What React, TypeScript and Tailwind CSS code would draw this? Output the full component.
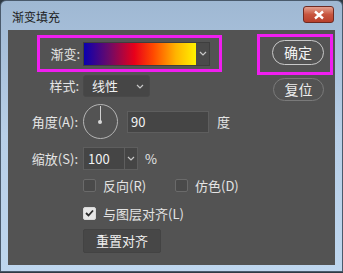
import React from 'react';

const font = { fontFamily: '"Noto Sans CJK SC", "Liberation Sans", sans-serif' };

const Chevron = () => (
  <svg width="8" height="5" viewBox="0 0 8 5" fill="none">
    <path d="M1 1l3 3 3-3" stroke="#c8c8c8" strokeWidth="1.2" />
  </svg>
);

const Checkbox = ({ checked, label }: { checked?: boolean; label: string }) => (
  <div className="flex items-center gap-[7px]">
    <span
      className={`flex h-[13px] w-[13px] items-center justify-center rounded-[2px] border ${
        checked ? 'border-[#d8d8d8] bg-[#e6e6e6]' : 'border-[#6a6a6a] bg-[#4a4a4a]'
      }`}
    >
      {checked && (
        <svg width="9" height="8" viewBox="0 0 9 8" fill="none">
          <path d="M1 4l2.5 2.5L8 1.5" stroke="#2a2a2a" strokeWidth="1.8" />
        </svg>
      )}
    </span>
    <span className="text-[13px] leading-none text-[#e4e4e4]">{label}</span>
  </div>
);

export default function App() {
  return (
    <div style={font} className="relative h-[273px] w-[343px] overflow-hidden bg-[#2f3a44]">
      <div className="flex h-[272px] w-[343px] flex-col rounded-t-[6px] border border-[#4a5a6c] bg-gradient-to-b from-[#9fb8d3] via-[#b8cfe7] to-[#bed6ee] pl-[7px] pr-[7px]">
        {/* title bar */}
        <div className="flex h-[29px] shrink-0 items-center justify-between">
          <span className="pl-[4px] pt-[3px] text-[12px] text-[#1c1c1c]">渐变填充</span>
          <div className="mb-[2px] mr-[1px] flex h-[17px] w-[31px] items-center justify-center rounded-[3px] border border-[#6e2a22] bg-gradient-to-b from-[#e3a090] via-[#c8553f] to-[#b8402c]">
            <svg width="12" height="10" viewBox="0 0 12 10">
              <path d="M2 1.5l8 7M10 1.5l-8 7" stroke="#ffffff" strokeWidth="2.4" />
            </svg>
          </div>
        </div>

        {/* content */}
        <div className="flex h-[235px] w-[327px] bg-[#535353] text-[#e4e4e4]">
          <div className="flex flex-1 flex-col">
            {/* gradient row */}
            <div className="ml-[29px] mt-[5px] flex h-[37px] w-[185px] items-center border-[3px] border-[#f01ef0]">
              <span className="w-[40px] shrink-0 text-right text-[13px]">渐变:</span>
              <div className="ml-[3px] flex h-[24px] w-[127px] border border-[#3e3e3e]">
                <div className="flex-1 bg-[linear-gradient(to_right,#0a00b0_0%,#6a0a6a_22%,#e8001a_45%,#ff4a00_62%,#ffb400_82%,#fff200_100%)]" />
                <div className="flex w-[13px] items-center justify-center bg-[#4a4a4a]">
                  <Chevron />
                </div>
              </div>
            </div>

            {/* style */}
            <div className="mt-[3px] flex h-[22px] items-center">
              <span className="w-[71px] shrink-0 text-right text-[13px]">样式:</span>
              <div className="ml-[4px] flex h-[22px] w-[67px] items-center justify-between rounded-[3px] border border-[#494949] bg-[#464646] pl-[8px] pr-[5px]">
                <span className="text-[13px] text-[#f0f0f0]">线性</span>
                <Chevron />
              </div>
            </div>

            {/* angle */}
            <div className="mt-[7px] flex h-[35px] items-center">
              <span className="w-[70px] shrink-0 text-right text-[13px]">角度(A):</span>
              <div className="relative ml-[5px] h-[35px] w-[35px] rounded-full border-[1.5px] border-[#b4b4b4]">
                <div className="absolute left-[15.5px] top-[1px] h-[16px] w-[1.5px] bg-[#d0d0d0]" />
                <div className="absolute left-[14px] top-[14.5px] h-[4px] w-[4px] rounded-full bg-[#d8d8d8]" />
              </div>
              <div className="ml-[9px] flex h-[22px] w-[82px] items-center border border-[#5e5e5e] bg-[#454545] pl-[3px] text-[13px] text-[#f2f2f2]">
                90
              </div>
              <span className="ml-[8px] text-[13px]">度</span>
            </div>

            {/* scale */}
            <div className="mt-[8px] flex h-[23px] items-center">
              <span className="w-[70px] shrink-0 text-right text-[13px]">缩放(S):</span>
              <div className="ml-[5px] flex h-[23px] w-[55px] border border-[#5e5e5e] bg-[#454545]">
                <span className="flex-1 pl-[4px] text-[13px] leading-[21px] text-[#f2f2f2]">100</span>
                <div className="flex w-[13px] items-center justify-center border-l border-[#5e5e5e]">
                  <Chevron />
                </div>
              </div>
              <span className="ml-[7px] text-[13px]">%</span>
            </div>

            {/* checkboxes */}
            <div className="ml-[75px] mt-[7px] flex h-[16px] items-center">
              <div className="w-[92px]">
                <Checkbox label="反向(R)" />
              </div>
              <Checkbox label="仿色(D)" />
            </div>
            <div className="ml-[75px] mt-[12px] flex h-[16px] items-center">
              <Checkbox checked label="与图层对齐(L)" />
            </div>

            {/* reset align */}
            <div className="ml-[75px] mt-[8px]">
              <div className="flex h-[24px] w-[78px] items-center justify-center rounded-[2px] border border-[#434343] bg-[#474747] text-[13px] text-[#f0f0f0]">
                重置对齐
              </div>
            </div>
          </div>

          {/* buttons */}
          <div className="mr-[2px] mt-[4px] flex w-[76px] flex-col">
            <div className="flex h-[41px] w-[76px] items-start border-[3px] border-[#f01ef0] pl-[12px] pt-[3px]">
              <div className="flex h-[25px] w-[52px] items-center justify-center rounded-full border-[1.5px] border-[#c8c8c8] text-[14px] text-[#f4f4f4]">
                确定
              </div>
            </div>
            <div className="ml-[16px] mt-[3px] flex h-[23px] w-[51px] items-center justify-center rounded-full border border-[#7a7a7a] text-[14px] text-[#ececec]">
              复位
            </div>
          </div>
        </div>
      </div>
    </div>
  );
}
